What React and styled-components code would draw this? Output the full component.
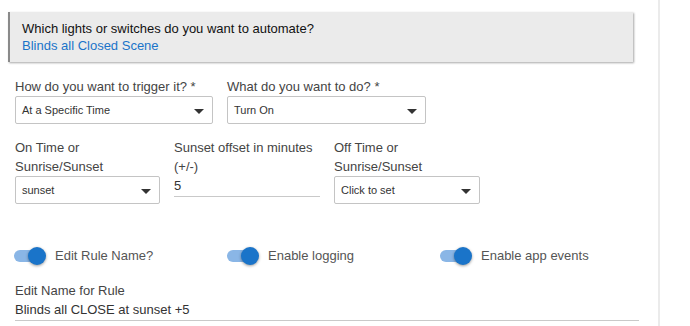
import React from "react";
import styled, { createGlobalStyle } from "styled-components";

const Global = createGlobalStyle`
  html, body { margin: 0; padding: 0; background: #fff; }
  body { font-family: "Liberation Sans", Arial, sans-serif; color: #333; }
`;

const Page = styled.div`
  display: flex;
  height: 326px;
  overflow: hidden;
`;

const Main = styled.div`
  width: 660px;
  padding: 12px 0 0 8px;
  border-right: 2px solid #ebebeb;
  box-sizing: border-box;
  flex: none;
`;

const InfoBox = styled.div`
  width: 625px;
  box-sizing: border-box;
  background: #ebebeb;
  border-left: 2px solid #8a8a8a;
  box-shadow: 1px 1px 2px rgba(0, 0, 0, 0.35);
  padding: 8px 12px 8px 12px;
  font-size: 13px;
  line-height: 17px;
`;

const InfoTitle = styled.div`
  color: #111;
`;

const InfoLink = styled.div`
  color: #1a74c9;
`;

const Form = styled.div`
  padding-left: 7px;
`;

const Row = styled.div`
  display: flex;
  gap: 14px;
  margin-top: ${(p) => p.$mt}px;
  align-items: flex-start;
`;

const Field = styled.div`
  width: ${(p) => p.$w}px;
  display: flex;
  flex-direction: column;
`;

const Label = styled.div`
  font-size: 13px;
  line-height: 19px;
  color: #444;
`;

const Select = styled.div`
  height: 28px;
  box-sizing: border-box;
  border: 1px solid #c4c4c4;
  border-radius: 2px;
  display: flex;
  align-items: center;
  justify-content: space-between;
  padding: 0 8px 0 6px;
  font-size: 11px;
  color: #333;
`;

const Caret = styled.span`
  width: 0;
  height: 0;
  border-left: 5px solid transparent;
  border-right: 5px solid transparent;
  border-top: 5px solid #333;
  margin-top: 2px;
`;

const TextValue = styled.div`
  font-size: 13px;
  line-height: 20px;
  color: #333;
  border-bottom: 1px solid #c9c9c9;
`;

const ToggleRow = styled.div`
  display: flex;
  align-items: center;
  margin-top: 44px;
`;

const ToggleItem = styled.div`
  display: flex;
  align-items: center;
  width: ${(p) => p.$w}px;
  gap: 9px;
`;

const Track = styled.div`
  position: relative;
  width: 26px;
  height: 12px;
  border-radius: 6px;
  background: #8ab6e6;
  margin-left: -1px;
`;

const Knob = styled.div`
  position: absolute;
  right: -6px;
  top: -3px;
  width: 18px;
  height: 18px;
  border-radius: 50%;
  background: #1a74c9;
  box-shadow: 0 1px 3px rgba(0, 0, 0, 0.4);
`;

const ToggleLabel = styled.div`
  font-size: 13px;
  color: #555;
  margin-left: 6px;
`;

const NameField = styled.div`
  width: 624px;
  margin-top: 18px;
`;

const Toggle = ({ label, w }) => (
  <ToggleItem $w={w}>
    <Track>
      <Knob />
    </Track>
    <ToggleLabel>{label}</ToggleLabel>
  </ToggleItem>
);

export default function App() {
  return (
    <>
      <Global />
      <Page>
        <Main>
          <InfoBox>
            <InfoTitle>Which lights or switches do you want to automate?</InfoTitle>
            <InfoLink>Blinds all Closed Scene</InfoLink>
          </InfoBox>
          <Form>
            <Row $mt={15}>
              <Field $w={198}>
                <Label>How do you want to trigger it? *</Label>
                <Select>
                  At a Specific Time <Caret />
                </Select>
              </Field>
              <Field $w={199}>
                <Label>What do you want to do? *</Label>
                <Select>
                  Turn On <Caret />
                </Select>
              </Field>
            </Row>
            <Row $mt={14}>
              <Field $w={145}>
                <Label>
                  On Time or
                  <br />
                  Sunrise/Sunset
                </Label>
                <Select>
                  sunset <Caret />
                </Select>
              </Field>
              <Field $w={146}>
                <Label>
                  Sunset offset in minutes
                  <br />
                  (+/-)
                </Label>
                <TextValue>5</TextValue>
              </Field>
              <Field $w={146}>
                <Label>
                  Off Time or
                  <br />
                  Sunrise/Sunset
                </Label>
                <Select>
                  Click to set <Caret />
                </Select>
              </Field>
            </Row>
            <ToggleRow>
              <Toggle label="Edit Rule Name?" w={213} />
              <Toggle label="Enable logging" w={213} />
              <Toggle label="Enable app events" w={200} />
            </ToggleRow>
            <NameField>
              <Label>Edit Name for Rule</Label>
              <TextValue>Blinds all CLOSE at sunset +5</TextValue>
            </NameField>
          </Form>
        </Main>
      </Page>
    </>
  );
}
